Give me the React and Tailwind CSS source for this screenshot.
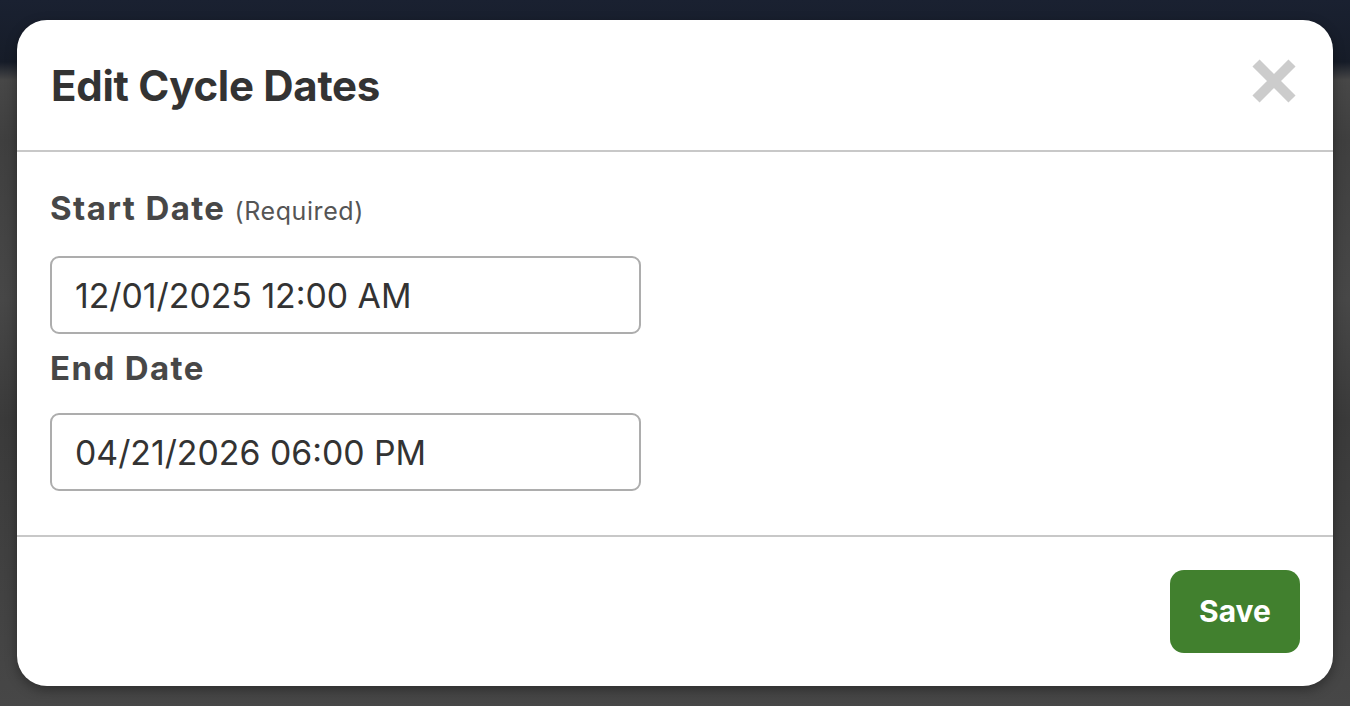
import { useState } from "react";

const DateField = ({ label, note, value, id }) => {
  return (
    <div className="flex flex-col">
      <label htmlFor={id} className="text-[33px] leading-[36px] font-bold tracking-[1.4px] text-[#474747]">
        {label}
        {note && <span className="ml-[9px] text-[25px] font-normal tracking-[0.6px] text-[#555]">{note}</span>}
      </label>
      <input
        id={id}
        type="text"
        defaultValue={value}
        className="mt-[27px] w-[591px] h-[78px] rounded-[9px] border-2 border-[#adadad] px-[23px] text-[33.8px] text-[#333] outline-none"
      />
    </div>
  );
};

const App = () => {
  const [open, setOpen] = useState(true);

  return (
    <div
      className="w-full h-screen overflow-hidden bg-[linear-gradient(to_bottom,#1a2131_0px,#161c28_62px,#474747_80px,#3f3f3f_140px,#474747_300px,#3a3a3a_420px,#474747_706px)] pt-[20px] px-[17px]"
      style={{ fontFamily: "Inter, 'Liberation Sans', sans-serif" }}
    >
      {open && (
        <div className="w-[1316px] h-[666px] bg-white rounded-[30px] flex flex-col shadow-[0_4px_12px_rgba(0,0,0,0.35)]">
          <div className="h-[132px] flex items-center justify-between pl-[34px] pr-[36px] border-b-2 border-[#c8c8c8]">
            <h1 className="text-[42px] font-bold text-[#333] tracking-[-0.3px]">Edit Cycle Dates</h1>
            <button onClick={() => setOpen(false)} className="w-[46px] h-[46px] -mt-[9px] flex items-center justify-center" aria-label="Close">
              <svg width="46" height="46" viewBox="0 0 46 46">
                <path d="M5 5 L41 41 M41 5 L5 41" stroke="#cccccc" strokeWidth="10" strokeLinecap="butt" />
              </svg>
            </button>
          </div>
          <div className="flex flex-col gap-[16px] px-[33px] pt-[38px] pb-[44px] border-b-2 border-[#c8c8c8]">
            <DateField id="start" label="Start Date" note="(Required)" value="12/01/2025 12:00 AM" />
            <DateField id="end" label="End Date" value="04/21/2026 06:00 PM" />
          </div>
          <div className="flex justify-end pt-[33px] pr-[33px]">
            <button className="w-[130px] h-[83px] rounded-[14px] bg-[#41802e] text-white text-[30px] font-bold">Save</button>
          </div>
        </div>
      )}
    </div>
  );
};

export default App;
